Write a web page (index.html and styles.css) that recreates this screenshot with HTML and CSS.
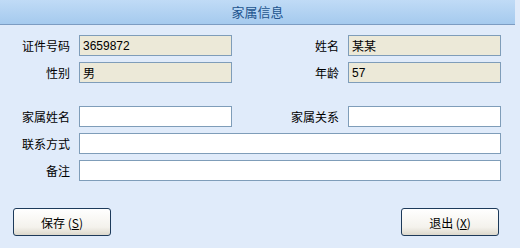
FILE: index.html
```html
<!DOCTYPE html>
<html lang="zh-CN">
<head>
  <meta charset="UTF-8">
  <title>家属信息</title>
  <link rel="stylesheet" href="styles.css">
</head>
<body>
  <div class="dialog">
    <div class="title">家属信息</div>

    <div class="form">
      <label class="lbl">证件号码</label>
      <input class="field readonly" type="text" value="3659872" readonly>
      <label class="lbl">姓名</label>
      <input class="field readonly" type="text" value="某某" readonly>

      <label class="lbl">性别</label>
      <input class="field readonly" type="text" value="男" readonly>
      <label class="lbl">年龄</label>
      <input class="field readonly" type="text" value="57" readonly>
    </div>

    <div class="form second">
      <label class="lbl">家属姓名</label>
      <input class="field" type="text">
      <label class="lbl">家属关系</label>
      <input class="field" type="text">

      <label class="lbl">联系方式</label>
      <input class="field wide" type="text">

      <label class="lbl">备注</label>
      <input class="field wide" type="text">
    </div>

    <div class="buttons">
      <button class="btn">保存 (<u>S</u>)</button>
      <button class="btn">退出 (<u>X</u>)</button>
    </div>
  </div>
</body>
</html>
```

FILE: styles.css
```css
body {
  margin: 0;
  background: #e0ebfa;
  font-family: "Noto Sans CJK SC", "DejaVu Sans", sans-serif;
  font-size: 12px;
  color: #000;
}

.dialog {
  width: 520px;
  height: 248px;
}

.title {
  height: 24px;
  line-height: 24px;
  margin-right: 5px;
  border-bottom: 1px solid #7c9cc2;
  background: linear-gradient(#c0dbf6, #a5caee);
  text-align: center;
  color: #22548e;
  font-size: 13px;
}

.form {
  display: grid;
  grid-template-columns: 70px 153px 98px 153px;
  grid-auto-rows: 21px;
  column-gap: 9px;
  row-gap: 6px;
  padding-top: 10px;
}

.form.second {
  padding-top: 23px;
}

.lbl {
  text-align: right;
  line-height: 21px;
}

.field {
  box-sizing: border-box;
  height: 21px;
  margin: 0;
  padding: 0 3px;
  border: 1px solid #7f9db9;
  background: #fff;
  font-family: "Liberation Sans", "Noto Sans CJK SC", sans-serif;
  font-size: 12px;
  outline: none;
}

.readonly {
  background: #ece9d8;
}

.wide {
  grid-column: 2 / 5;
}

.buttons {
  display: flex;
  justify-content: space-between;
  padding: 27px 21px 0 13px;
}

.btn {
  width: 98px;
  height: 28px;
  border: 1px solid #1d3a5a;
  border-radius: 3px;
  background: linear-gradient(#ffffff, #f4f2ec 70%, #dcd8cc);
  font-family: "Noto Sans CJK SC", sans-serif;
  font-size: 12px;
  color: #000;
  cursor: pointer;
}
```
